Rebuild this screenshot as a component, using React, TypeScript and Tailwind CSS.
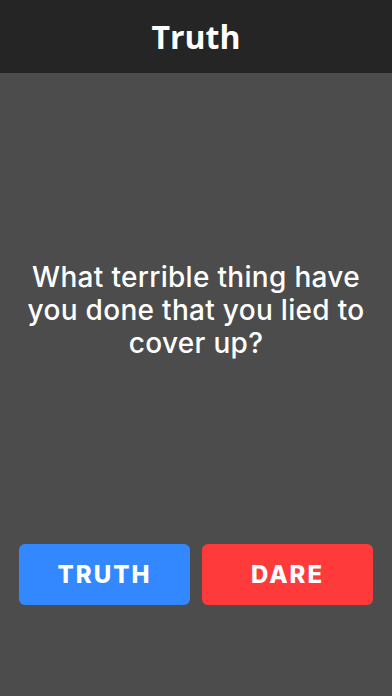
import React from 'react';

const question = 'What terrible thing have you done that you lied to cover up?';

export default function App() {
  return (
    <div className="flex h-[696px] w-full flex-col bg-[#4c4c4c]">
      <header className="flex h-[73px] shrink-0 items-center justify-center bg-[#252525]">
        <h1 className="text-[32px] font-bold text-white" style={{ fontFamily: '"Open Sans", sans-serif' }}>
          Truth
        </h1>
      </header>

      <main className="flex flex-1 flex-col">
        <div className="flex flex-1 items-center justify-center px-4 pt-1">
          <p
            className="text-center text-[28px] leading-[33px] font-medium tracking-[0.3px] text-white"
            style={{ fontFamily: 'Inter, sans-serif' }}
          >
            {question}
          </p>
        </div>

        <div className="flex gap-3 px-[19px] pb-[91px]" style={{ fontFamily: 'Inter, sans-serif' }}>
          <button className="flex h-[61px] flex-1 items-center justify-center rounded-md bg-[#3388ff] text-[24px] font-extrabold tracking-[2px] text-white">
            TRUTH
          </button>
          <button className="flex h-[61px] flex-1 items-center justify-center rounded-md bg-[#ff3a3a] text-[24px] font-extrabold tracking-[2px] text-white">
            DARE
          </button>
        </div>
      </main>
    </div>
  );
}
